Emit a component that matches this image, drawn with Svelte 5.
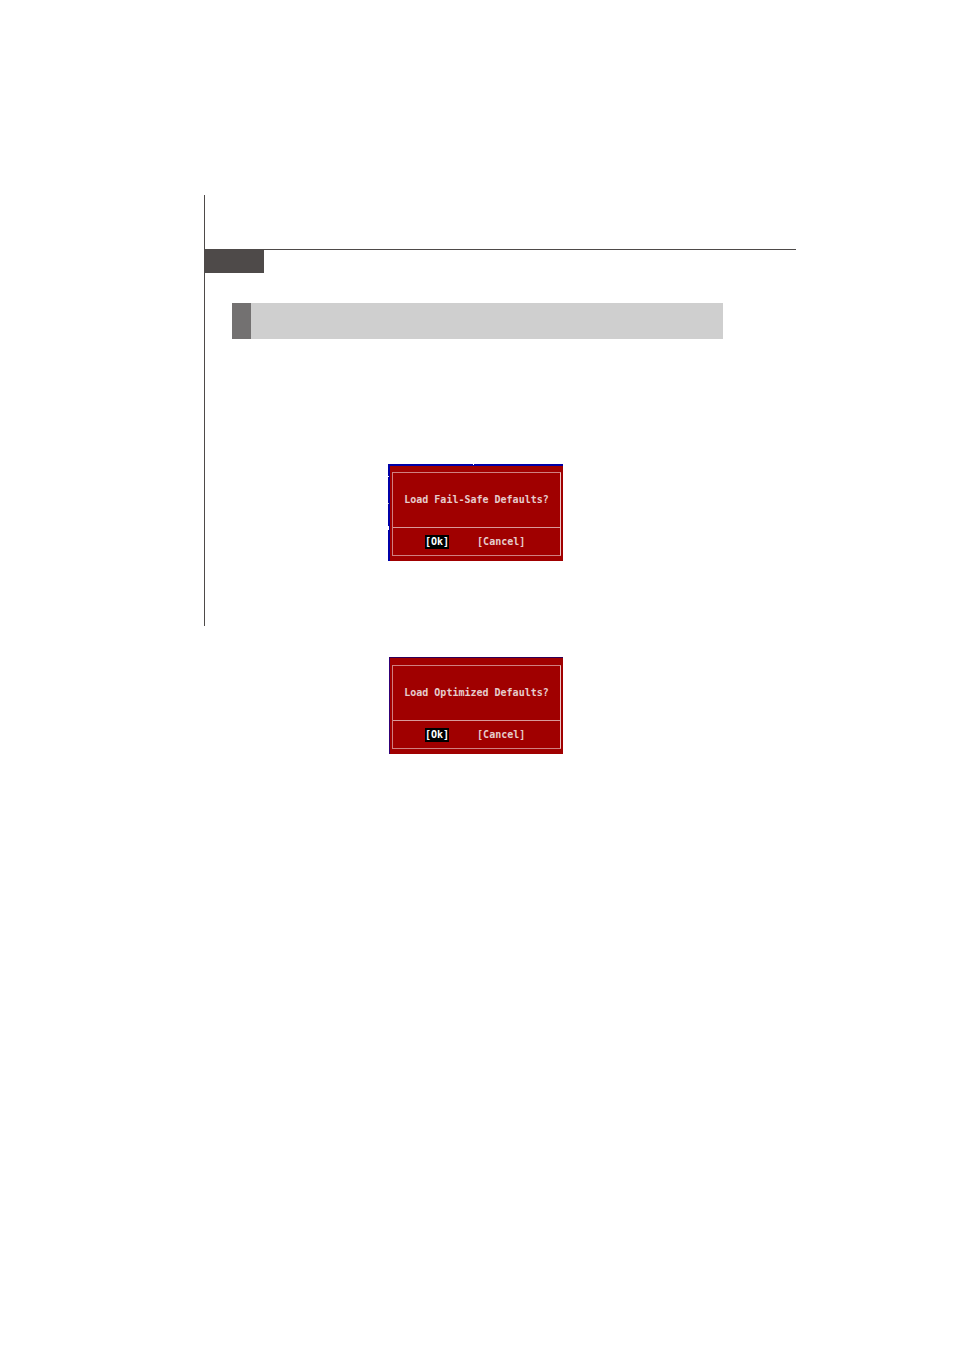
<script>
	const dialogs = [
		{ id: 'failsafe', title: 'Load Fail-Safe Defaults?' },
		{ id: 'optimized', title: 'Load Optimized Defaults?' }
	];
</script>

{#snippet dialog(item)}
	<div class="dialog {item.id}" role="dialog" aria-labelledby="{item.id}-title">
		<div class="frame">
			<p class="title" id="{item.id}-title">{item.title}</p>
			<div class="actions">
				<button class="selected">[Ok]</button>
				<button>[Cancel]</button>
			</div>
		</div>
	</div>
{/snippet}

<main class="page">
	<section class="ruled">
		<header>
			<div class="tab"></div>
		</header>
		<div class="heading"></div>
		{@render dialog(dialogs[0])}
	</section>
	<section class="plain">
		{@render dialog(dialogs[1])}
	</section>
</main>

<style>
	:global(body) {
		margin: 0;
		background: #fff;
	}

	.page {
		padding: 195px 158px 0 204px;
	}

	.ruled {
		box-sizing: border-box;
		border-left: 1px solid #4e4a49;
		padding: 54px 0 65px;
	}

	.plain {
		border-left: 1px solid transparent;
		padding: 31px 0;
	}

	header {
		border-top: 1px solid #4e4a49;
	}

	.tab {
		width: 59px;
		height: 23px;
		background: #4e4a49;
	}

	.heading {
		box-sizing: border-box;
		height: 36px;
		margin: 30px 73px 125px 27px;
		border-left: 19px solid #737171;
		background: #cfcfcf;
	}

	.dialog {
		box-sizing: border-box;
		width: 175px;
		margin-left: 183px;
		padding: 6px 2px 5px;
		background: #a00000;
		font-family: 'DejaVu Sans Mono', 'Liberation Mono', monospace;
		font-size: 10px;
		font-weight: bold;
		line-height: 14px;
		color: #e6cccc;
	}

	/* light marks are the menu text peeking out behind the dialog */
	.failsafe {
		border-top: 2px solid transparent;
		border-left: 2px solid transparent;
		background:
			linear-gradient(#fff, #fff) 85px 0 / 1px 1px no-repeat border-box,
			linear-gradient(#fff, #fff) 0 12px / 1px 1px no-repeat border-box,
			linear-gradient(#bbb, #bbb) 0 39px / 1px 1px no-repeat border-box,
			linear-gradient(#fff, #fff) 0 62px / 1px 4px no-repeat border-box,
			linear-gradient(90deg, #0000a8 2px, transparent 2px) border-box,
			linear-gradient(#0000a8 2px, #a00000 2px) border-box;
	}

	.optimized {
		width: 174px;
		margin-left: 184px;
		padding: 7px 2px 5px;
		border-top: 1px solid #300058;
		border-left: 1px solid #300078;
	}

	.frame {
		border: 1px solid #cf8080;
		border-right-color: #ecc4c4;
	}

	.title {
		margin: 0;
		padding: 20px 0;
		text-align: center;
		white-space: nowrap;
	}

	.actions {
		display: flex;
		gap: 28px;
		padding: 7px 0 6px 32px;
		border-top: 1px solid #d99a9a;
	}

	button {
		margin: 0;
		padding: 0;
		border: 0;
		background: none;
		font: inherit;
		color: inherit;
		cursor: pointer;
	}

	.selected {
		background: #000;
		color: #fff;
	}
</style>
